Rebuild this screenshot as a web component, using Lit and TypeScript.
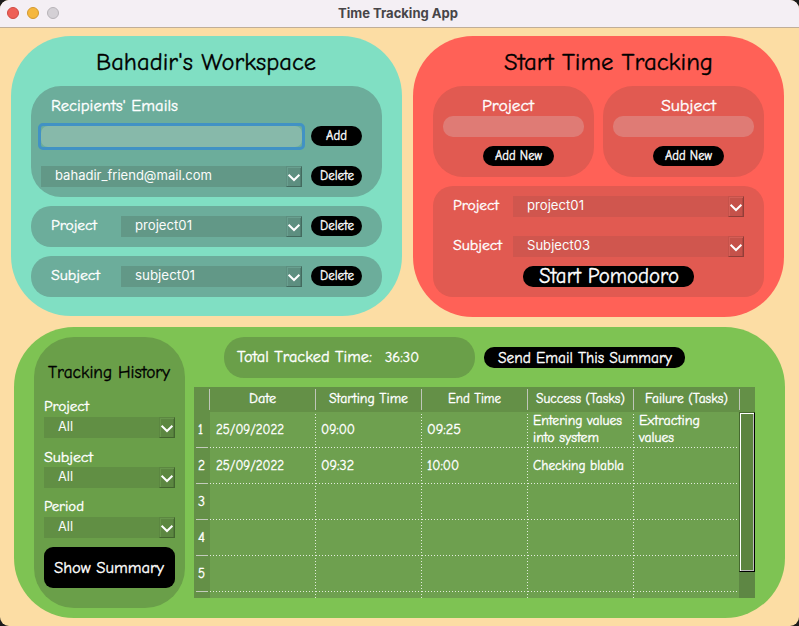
import { LitElement, html, css, svg } from "lit";
import { customElement, property } from "lit/decorators.js";

/** One line of lettering, spread evenly over a given width. */
@customElement("note-text")
class NoteText extends LitElement {
  @property() text = "";
  @property({ type: Number }) w = 50;
  @property({ type: Number }) size = 14;
  @property({ type: Number }) base = 14;

  static styles = css`
    :host { display: block; flex: none; height: 21px; }
    svg { display: block; overflow: visible; }
    text {
      fill: currentColor;
      font-family: Chalkboard, "Chalkboard SE", "Comic Neue", Lato, sans-serif;
      font-weight: 500;
      font-variant-ligatures: none;
      stroke: currentColor;
      stroke-width: 0.35px;
    }
  `;

  render() {
    return html`<svg width=${this.w} height="21">
      ${svg`<text x="0" y=${this.base} font-size=${this.size * 1.06} textLength=${this.w} lengthAdjust="spacingAndGlyphs">${this.text}</text>`}
    </svg>`;
  }
}

/** Drop-down box with a bevelled arrow button. */
@customElement("combo-box")
class ComboBox extends LitElement {
  @property() value = "";
  @property({ type: Number }) w = 50;

  static styles = css`
    :host {
      display: flex; box-sizing: border-box; height: 21px; padding-left: 14px;
      justify-content: space-between; background: var(--combo); color: #fff;
    }
    .value { display: block; overflow: visible; }
    .value text { fill: #fafcfb; font-family: Inter, "Liberation Sans", sans-serif; font-size: 13px; }
    .arrow {
      box-sizing: border-box; width: 16px; height: 21px; background: var(--combo-btn);
      border: 1px solid var(--combo-btn);
      border-right-color: var(--combo-edge); border-bottom-color: var(--combo-edge);
      box-shadow: inset 1px 1px 0 var(--combo-light), inset -1px 0 0 var(--combo-shade);
    }
    .arrow svg { display: block; }
  `;

  render() {
    return html`
      <svg class="value" width=${this.w} height="21">
        ${svg`<text x="0" y="14" textLength=${this.w} lengthAdjust="spacingAndGlyphs">${this.value}</text>`}
      </svg>
      <div class="arrow">
        <svg width="14" height="19" viewBox="0 0 14 19">
          <path d="M1.6 7.8 L7 13 L12.4 7.8" fill="none" stroke="#fff" stroke-width="2" />
        </svg>
      </div>`;
  }
}

const t = (text: string, w: number, size = 14, base = 14) =>
  html`<note-text .text=${text} .w=${w} .size=${size} .base=${base}></note-text>`;

type Line = [string, number];
const COLUMNS: Line[] = [
  ["Date", 27], ["Starting Time", 79], ["End Time", 53], ["Success (Tasks)", 89], ["Failure (Tasks)", 83],
];
const ROWS: Line[][][] = [
  [[["25/09/2022", 68]], [["09:00", 34]], [["09:25", 34]],
    [["Entering values", 89], ["into system", 66]], [["Extracting", 61], ["values", 35]]],
  [[["25/09/2022", 68]], [["09:32", 33]], [["10:00", 32]], [["Checking blabla", 91]], []],
  [[], [], [], [], []],
  [[], [], [], [], []],
  [[], [], [], [], []],
];

@customElement("history-table")
class HistoryTable extends LitElement {
  static styles = css`
    :host { display: flex; width: 561px; height: 211px; background: #6ea04f; color: #fff; overflow: hidden; }
    .grid { width: 545px; display: flex; flex-direction: column; flex: none; }
    .head { display: flex; height: 25px; background: #649047; width: 561px; }
    .corner { width: 15px; flex: none; }
    .th { width: 106px; display: flex; justify-content: center; position: relative; padding: 2px 0 0 1px; box-sizing: border-box; }
    .th::before, .end::before { content: ""; position: absolute; left: 0; top: 2px; width: 1px; height: 21px; background: #bfc6b9; }
    .end { position: relative; width: 16px; }
    .row { display: flex; height: 36px; flex: none; }
    .num { box-sizing: border-box; width: 16px; flex: none; background: #649047; padding: 8px 0 0 4px; position: relative; }
    .num::after { content: ""; position: absolute; left: 2px; bottom: 0; width: 12px; height: 1px; background: #c3cbbc; }
    .cell {
      box-sizing: border-box; width: 106px; flex: none; padding-left: 5px;
      display: flex; flex-direction: column; justify-content: center;
      background:
        repeating-linear-gradient(90deg, #e3ecdd 0 1px, transparent 1px 3px) 0 100% / 100% 1px no-repeat,
        repeating-linear-gradient(0deg, #e3ecdd 0 1px, transparent 1px 3px) 100% 0 / 1px 100% no-repeat;
    }
    .cell:nth-child(2) { padding-left: 6px; }
    .cell note-text { height: 17px; }
    .spare { display: flex; height: 6px; }
    .spare .num { padding: 0; }
    .spare .num::after { display: none; }
    .spare .cell {
      background: repeating-linear-gradient(0deg, #e3ecdd 0 1px, transparent 1px 3px) 100% 0 / 1px 100% no-repeat;
    }
    .scroll { width: 16px; margin-top: 25px; background: #5e8744; }
    .thumb {
      box-sizing: border-box; height: 160px; background: #5c843f;
      border: 1px solid #000; border-left-color: #46692f; border-top-color: #46692f;
      box-shadow: inset 1px 1px 0 #fff, inset -1px -1px 0 #bdbdbd;
    }
  `;

  render() {
    return html`
      <div class="grid">
        <div class="head">
          <div class="corner"></div>
          ${COLUMNS.map(([label, w]) => html`<div class="th">${t(label, w, 12.5)}</div>`)}
          <div class="end"></div>
        </div>
        ${ROWS.map((cells, i) => html`
          <div class="row">
            <div class="num">${t(String(i + 1), i ? 7 : 5, 12.5)}</div>
            ${cells.map((lines) => html`<div class="cell">${lines.map(([s, w]) => t(s, w, 12.5, 12))}</div>`)}
          </div>`)}
        <div class="spare"><div class="num"></div>${COLUMNS.map(() => html`<div class="cell"></div>`)}</div>
      </div>
      <div class="scroll"><div class="thumb"></div></div>`;
  }
}

@customElement("app-root")
class AppRoot extends LitElement {
  static styles = css`
    :host { display: block; width: 799px; height: 626px; background: #1c1c1c; overflow: hidden; }
    * { box-sizing: border-box; }
    .window { height: 626px; background: #fcdda4; border-radius: 9px; overflow: hidden; }
    .bar {
      height: 28px; background: #f4eff4; border-bottom: 1px solid #c0ae98;
      display: grid; grid-template-columns: 1fr auto 1fr; align-items: center; padding: 0 10px 0 7px;
    }
    .lights { display: flex; gap: 8px; }
    .light { width: 12px; height: 12px; border-radius: 50%; border: 1px solid; margin-top: -1px; }
    .close { background: #ee5f56; border-color: #cf4a43; }
    .min { background: #f5b73d; border-color: #d3992f; }
    .max { background: #d4d0d5; border-color: #b7b3b8; }
    .caption { margin-top: -2px; display: block; overflow: visible; }
    .caption text { font: 700 13px Inter, sans-serif; fill: #474548; }
    .top { display: flex; padding: 8px 0 0 11px; gap: 11px; align-items: flex-start; }
    .card { border-radius: 60px; color: #fff; display: flex; flex-direction: column; }
    .teal {
      width: 391px; height: 280px; background: #80dfc3; padding: 20px 20px 0;
      --combo: #629887; --combo-btn: #5d8f80; --combo-edge: #436a5e; --combo-light: #699f8f; --combo-shade: #527f72;
    }
    .red {
      width: 371px; height: 281px; background: #ff6157; padding: 20px 20px 0;
      --combo: #d0564e; --combo-btn: #c5524a; --combo-edge: #913e38; --combo-light: #d45e56; --combo-shade: #b04841;
    }
    .green {
      width: 771px; height: 291px; background: #7ec353; margin: 10px 0 0 14px; padding: 10px 20px; flex-direction: row;
      --combo: #618f44; --combo-btn: #5c8741; --combo-edge: #43652f; --combo-light: #68964c; --combo-shade: #527a3a;
    }
    .heading { display: flex; justify-content: center; height: 30px; color: #000; }
    .teal .heading { padding-right: 1px; }
    .red .heading { padding-left: 19px; }
    .pane { background: #6cad9b; border-radius: 30px; height: 111px; padding: 11px 20px 0 10px; }
    .pane .label { padding-left: 10px; height: 29px; }
    .line { display: flex; gap: 9px; height: 21px; }
    .line combo-box { width: 261px; }
    .field { border-radius: 10px; height: 21px; }
    .mail { width: 261px; background: #6cad9b; outline: 3px solid #4192c4; border-radius: 2px; }
    .mail .field { background: #87b9aa; border-radius: 7px; }
    .gap { margin-top: 19px; }
    .btn { background: #000; color: #fff; border-radius: 10px; height: 20px; display: flex; justify-content: center; }
    .small { width: 51px; }
    .strip { background: #6cad9b; border-radius: 20px; height: 41px; margin-top: 9px; padding: 10px 20px; display: flex; }
    .strip .name { width: 70px; flex: none; }
    .strip combo-box { width: 181px; margin-right: 9px; }
    .duo { display: flex; gap: 9px; }
    .box {
      width: 161px; height: 91px; border-radius: 30px; background: #e15a51; padding: 11px 10px;
      display: flex; flex-direction: column; align-items: flex-start;
    }
    .box .name { padding-left: 39px; height: 21px; }
    .box:last-child .name { padding-left: 48px; }
    .box .field { width: 141px; background: #df7b75; margin: -2px 0 9px; flex: none; }
    .box .btn { width: 71px; margin-left: 40px; }
    .choose { height: 111px; border-radius: 20px; background: #e15a51; margin-top: 9px; padding: 10px 20px; }
    .pair { display: flex; margin-bottom: 19px; }
    .pair .name { width: 60px; flex: none; }
    .pair combo-box { width: 231px; }
    .start { width: 171px; height: 21px; margin: -10px 0 0 70px; }
    .side { width: 151px; height: 271px; flex: none; border-radius: 40px; background: #6a9f49; padding: 27px 10px 0; }
    .side .title { display: flex; justify-content: center; color: #000; height: 33px; padding-right: 1px; }
    .side .name { height: 20px; }
    .side .second { margin-top: 10px; height: 19px; }
    .side .third { margin-top: 9px; }
    .show { height: 41px; margin-top: 9px; border-radius: 9px; align-items: center; padding-right: 1px; }
    .main { padding-left: 9px; }
    .summary { display: flex; padding-left: 30px; gap: 9px; height: 50px; }
    .total { width: 251px; height: 41px; border-radius: 20px; background: #6a9f49; display: flex; gap: 13px; padding: 10px 13px; }
    .send { width: 201px; height: 21px; margin-top: 10px; }
  `;

  strip(label: string, w: number, value: string, vw: number) {
    return html`<div class="strip">
      <div class="name">${t(label, w, 14)}</div>
      <combo-box .value=${value} .w=${vw}></combo-box>
      <div class="btn small">${t("Delete", 34, 12.5)}</div>
    </div>`;
  }

  box(label: string, w: number) {
    return html`<div class="box">
      <div class="name">${t(label, w, 16)}</div>
      <div class="field"></div>
      <div class="btn">${t("Add New", 47, 12.5)}</div>
    </div>`;
  }

  pair(label: string, w: number, value: string, vw: number) {
    return html`<div class="pair">
      <div class="name">${t(label, w, 14)}</div>
      <combo-box .value=${value} .w=${vw}></combo-box>
    </div>`;
  }

  render() {
    return html`
      <div class="window">
        <div class="bar">
          <div class="lights">
            <i class="light close"></i><i class="light min"></i><i class="light max"></i>
          </div>
          <svg class="caption" width="120" height="16">
            <text x="0" y="13" textLength="120" lengthAdjust="spacingAndGlyphs">Time Tracking App</text>
          </svg>
        </div>
        <div class="top">
          <section class="card teal">
            <div class="heading">${t("Bahadir's Workspace", 220, 23)}</div>
            <div class="pane">
              <div class="label">${t("Recipients' Emails", 127, 15)}</div>
              <div class="line">
                <div class="mail"><div class="field"></div></div>
                <div class="btn small">${t("Add", 21, 12.5)}</div>
              </div>
              <div class="line gap">
                <combo-box .value=${"bahadir_friend@mail.com"} .w=${157}></combo-box>
                <div class="btn small">${t("Delete", 34, 12.5)}</div>
              </div>
            </div>
            ${this.strip("Project", 46, "project01", 57)}
            ${this.strip("Subject", 49, "subject01", 60)}
          </section>
          <section class="card red">
            <div class="heading">${t("Start Time Tracking", 209, 23)}</div>
            <div class="duo">${this.box("Project", 52)}${this.box("Subject", 55)}</div>
            <div class="choose">
              ${this.pair("Project", 46, "project01", 57)}
              ${this.pair("Subject", 49, "Subject03", 63)}
              <div class="btn start">${t("Start Pomodoro", 140, 20, 17)}</div>
            </div>
          </section>
        </div>
        <section class="card green">
          <div class="side">
            <div class="title">${t("Tracking History", 122, 16.5)}</div>
            <div class="name">${t("Project", 45, 14)}</div>
            <combo-box .value=${"All"} .w=${15}></combo-box>
            <div class="name second">${t("Subject", 49, 14)}</div>
            <combo-box .value=${"All"} .w=${15}></combo-box>
            <div class="name third">${t("Period", 40, 14)}</div>
            <combo-box .value=${"All"} .w=${15}></combo-box>
            <div class="btn show">${t("Show Summary", 110, 16, 16)}</div>
          </div>
          <div class="main">
            <div class="summary">
              <div class="total">${t("Total Tracked Time:", 135, 15, 15)}${t("36:30", 34, 13.5, 15)}</div>
              <div class="btn send">${t("Send Email This Summary", 174, 15, 15.5)}</div>
            </div>
            <history-table></history-table>
          </div>
        </section>
      </div>`;
  }
}
